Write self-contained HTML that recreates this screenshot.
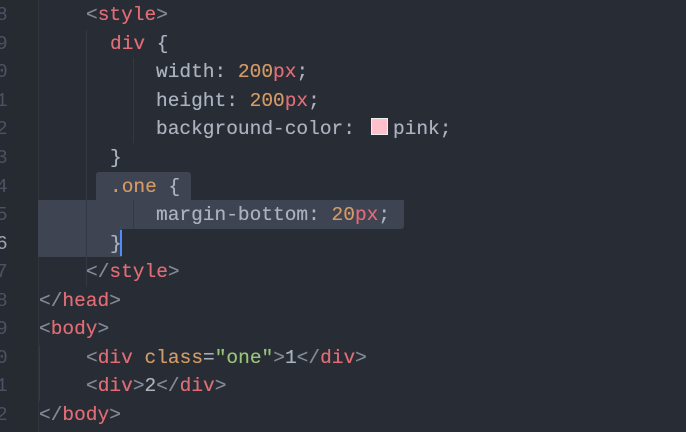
<!DOCTYPE html>
<html><head><meta charset="utf-8"><style>
html,body{margin:0;padding:0;}
body{width:686px;height:432px;overflow:hidden;background:#282c34;position:relative;font-family:"Liberation Mono","DejaVu Sans Mono",monospace;font-size:19.5px;color:#abb2bf;}
.gut{position:absolute;left:0;top:0;width:38px;height:432px;background:#262a31;border-right:1px solid #30343c;}
.ln{position:absolute;left:-4px;color:#4b5263;height:28px;line-height:28px;margin-top:1px;}
.l{position:absolute;white-space:pre;height:28px;line-height:28px;margin-top:1px;text-shadow:0 0 0.4px currentColor;}
.t{color:#e06c75}.p{color:#828997}.n{color:#d19a66}.s{color:#98c379}.a{color:#d19a66}
.sel{position:absolute;background:#3e4452;}
.g{position:absolute;width:1px;background:#343842;}
</style></head><body>
<div class="gut"></div>
<div class="sel" style="left:96px;top:172px;width:95px;height:29px;border-radius:3px 3px 0 0"></div>
<div class="sel" style="left:38px;top:200px;width:366px;height:29px;border-radius:0 0 3px 0"></div>
<div class="sel" style="left:38px;top:228px;width:84px;height:29px"></div>
<div class="g" style="left:86px;top:30px;height:200px"></div>
<div class="g" style="left:133px;top:58px;height:85px"></div>
<div class="g" style="left:133px;top:200px;height:30px"></div>
<div class="g" style="left:86px;top:230px;height:57px"></div>
<div class="g" style="left:39px;top:345px;height:56px"></div>
<div style="position:absolute;left:120px;top:230px;width:2px;height:26px;background:#528bff"></div>

<div class="ln" style="top:0">8</div>
<div class="ln" style="top:29px">9</div>
<div class="ln" style="top:57px">0</div>
<div class="ln" style="top:86px">1</div>
<div class="ln" style="top:114px">2</div>
<div class="ln" style="top:143px">3</div>
<div class="ln" style="top:172px">4</div>
<div class="ln" style="top:200px">5</div>
<div class="ln" style="top:229px;color:#9da5b4">6</div>
<div class="ln" style="top:257px">7</div>
<div class="ln" style="top:286px">8</div>
<div class="ln" style="top:314px">9</div>
<div class="ln" style="top:343px">0</div>
<div class="ln" style="top:371px">1</div>
<div class="ln" style="top:400px">2</div>

<div class="l" style="left:86px;top:0"><span class="p">&lt;</span><span class="t">style</span><span class="p">&gt;</span></div>
<div class="l" style="left:110px;top:29px"><span class="t">div</span> {</div>
<div class="l" style="left:156px;top:57px">width: <span class="n">200</span><span class="t">px</span>;</div>
<div class="l" style="left:156px;top:86px">height: <span class="n">200</span><span class="t">px</span>;</div>
<div class="l" style="left:156px;top:114px">background-color:<span style="display:inline-block;width:15px;height:15px;background:#ffc0cb;border:1px solid #eee;vertical-align:-1px;margin-left:16px;margin-right:5px"></span>pink;</div>
<div class="l" style="left:110px;top:143px">}</div>
<div class="l" style="left:110px;top:172px"><span class="n">.one</span> {</div>
<div class="l" style="left:156px;top:200px">margin-bottom: <span class="n">20</span><span class="t">px</span>;</div>
<div class="l" style="left:110px;top:229px">}</div>
<div class="l" style="left:86px;top:257px"><span class="p">&lt;/</span><span class="t">style</span><span class="p">&gt;</span></div>
<div class="l" style="left:39px;top:286px"><span class="p">&lt;/</span><span class="t">head</span><span class="p">&gt;</span></div>
<div class="l" style="left:39px;top:314px"><span class="p">&lt;</span><span class="t">body</span><span class="p">&gt;</span></div>
<div class="l" style="left:86px;top:343px"><span class="p">&lt;</span><span class="t">div</span> <span class="a">class</span>=<span class="s">"one"</span><span class="p">&gt;</span>1<span class="p">&lt;/</span><span class="t">div</span><span class="p">&gt;</span></div>
<div class="l" style="left:86px;top:371px"><span class="p">&lt;</span><span class="t">div</span><span class="p">&gt;</span>2<span class="p">&lt;/</span><span class="t">div</span><span class="p">&gt;</span></div>
<div class="l" style="left:39px;top:400px"><span class="p">&lt;/</span><span class="t">body</span><span class="p">&gt;</span></div>
</body></html>
